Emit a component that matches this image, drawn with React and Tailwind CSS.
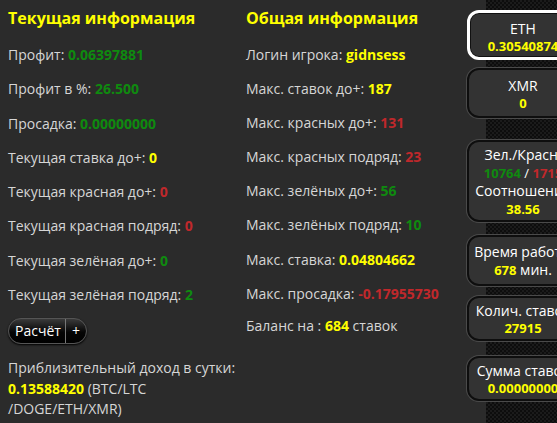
import React from 'react';

const green = 'text-[#0f8a0f]';
const red = 'text-[#c0282b]';
const yellow = 'text-[#ffff00]';

const leftRows = [
  { label: 'Профит:', value: '0.06397881', color: green },
  { label: 'Профит в %:', value: '26.500', color: green },
  { label: 'Просадка:', value: '0.00000000', color: green },
  { label: 'Текущая ставка до+:', value: '0', color: yellow },
  { label: 'Текущая красная до+:', value: '0', color: red },
  { label: 'Текущая красная подряд:', value: '0', color: red },
  { label: 'Текущая зелёная до+:', value: '0', color: green },
  { label: 'Текущая зелёная подряд:', value: '2', color: green }
];

const rightRows = [
  { label: 'Логин игрока:', value: 'gidnsess', color: yellow },
  { label: 'Макс. ставок до+:', value: '187', color: yellow },
  { label: 'Макс. красных до+:', value: '131', color: red },
  { label: 'Макс. красных подряд:', value: '23', color: red },
  { label: 'Макс. зелёных до+:', value: '56', color: green },
  { label: 'Макс. зелёных подряд:', value: '10', color: green },
  { label: 'Макс. ставка:', value: '0.04804662', color: yellow },
  { label: 'Макс. просадка:', value: '-0.17955730', color: red }
];

function Row({ label, value, color }) {
  return (
    <div className="whitespace-nowrap leading-[20px]">
      {label} <span className={`font-bold ${color}`}>{value}</span>
    </div>
  );
}

function Card({ active, className = '', children }) {
  return (
    <div
      className={`-ml-[19px] w-[112px] shrink-0 rounded-[12px] bg-[#333333] text-center leading-[17.5px] text-white whitespace-nowrap ${
        active
          ? 'border-[3px] border-white shadow-[inset_0_0_0_1px_#111]'
          : 'border-2 border-[#0e0e0e] shadow-[0_0_0_1px_#4a4a4a]'
      } ${className}`}
    >
      {children}
    </div>
  );
}

export default function App() {
  return (
    <div className="flex h-[423px] w-[557px] overflow-hidden bg-[#2b2b2b] text-[14px] text-[#d6d6d6] [font-family:'Open_Sans',sans-serif]">
      <div className="flex w-[486px] shrink-0">
        <section className="w-[246px] shrink-0 pl-[8px] pt-[7px]">
          <h2 className="text-[16px] font-bold leading-[22px] text-[#ffff00]">Текущая информация</h2>
          <div className="mt-[16px] flex flex-col gap-[14.3px]">
            {leftRows.map((r) => (
              <Row key={r.label} {...r} />
            ))}
          </div>
          <div className="mt-[13px] flex h-[26px] w-[79px] items-center overflow-hidden rounded-full border border-[#555] bg-[linear-gradient(#3a3a3a,#050505_55%,#000)] text-white shadow-[0_1px_2px_#000]">
            <span className="flex-1 pl-[6px] leading-none">Расчёт</span>
            <span className="h-full w-px bg-[#777]" />
            <span className="w-[20px] text-center leading-none">+</span>
          </div>
          <div className="mt-[14px] leading-[20.5px]">
            <div>Приблизительный доход в сутки:</div>
            <div>
              <span className="font-bold text-[#ffff00]">0.13588420</span> (BTC/LTC
            </div>
            <div>/DOGE/ETH/XMR)</div>
          </div>
        </section>

        <section className="w-[220px] shrink-0 pt-[7px]">
          <h2 className="text-[16px] font-bold leading-[22px] text-[#ffff00]">Общая информация</h2>
          <div className="mt-[16px] flex flex-col gap-[14.1px]">
            {rightRows.map((r) => (
              <Row key={r.label} {...r} />
            ))}
            <div className="-mt-[2px] whitespace-nowrap leading-[20px]">
              Баланс на : <span className="font-bold text-[#ffff00]">684</span> ставок
            </div>
          </div>
        </section>
      </div>

      <aside className="flex flex-1 flex-col bg-[repeating-conic-gradient(#1b1b1b_0_25%,#0d0d0d_0_50%)] bg-[length:4px_4px] pt-[10px]">
        <Card active className="h-[50px] pt-[7px]">
          <div>ETH</div>
          <div className="font-bold text-[13px] text-[#ffff00]">0.30540874</div>
        </Card>
        <Card className="mt-[8px] h-[50px] pt-[7px]">
          <div>XMR</div>
          <div className="font-bold text-[13px] text-[#ffff00]">0</div>
        </Card>
        <Card className="mt-[22px] h-[82px] pt-[4px] leading-[18px]">
          <div>Зел./Красн.</div>
          <div className="font-bold text-[13px]">
            <span className="text-[#0f8a0f]">10764</span> <span className="font-normal text-white">/</span>{' '}
            <span className="text-[#c0282b]">1715</span>
          </div>
          <div>Соотношение</div>
          <div className="font-bold text-[13px] text-[#ffff00]">38.56</div>
        </Card>
        <Card className="mt-[13px] h-[51px] pt-[6px]">
          <div>Время работы</div>
          <div>
            <span className="font-bold text-[13px] text-[#ffff00]">678</span> мин.
          </div>
        </Card>
        <Card className="mt-[10px] h-[45px] pt-[4px]">
          <div>Колич. ставок</div>
          <div className="font-bold text-[13px] text-[#ffff00]">27915</div>
        </Card>
        <Card className="mt-[15px] h-[45px] pt-[4px]">
          <div>Сумма ставок</div>
          <div className="font-bold text-[13px] text-[#ffff00]">0.00000000</div>
        </Card>
      </aside>
    </div>
  );
}
